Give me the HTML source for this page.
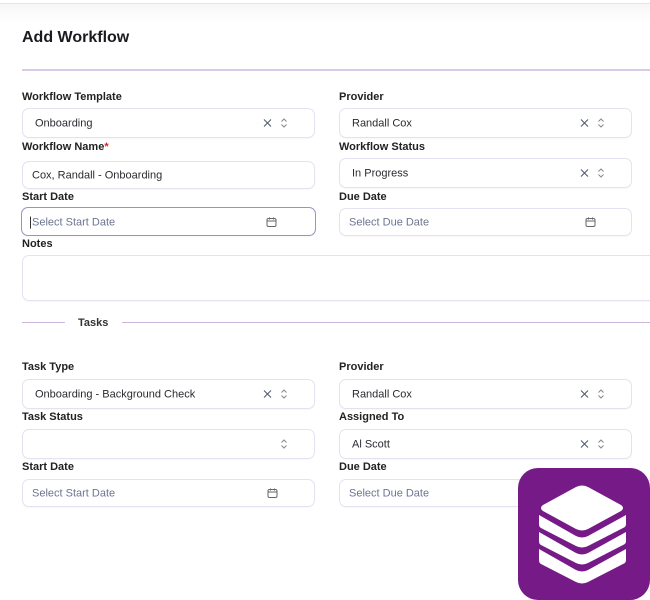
<!DOCTYPE html><html><head><style>
body{margin:0;width:650px;height:600px;background:#fff;font-family:"Liberation Sans",sans-serif;position:relative;overflow:hidden;color:#1f1f24}
.a{position:absolute}
.top{left:-10px;top:3px;width:680px;height:40px;border-top:1px solid #e6e6ea;background:linear-gradient(#f7f7f8,#fff 20px)}
h1{position:absolute;left:22px;top:29px;margin:0;font-size:16px;font-weight:bold;color:#1a1a1f}
.lab{position:absolute;font-size:11px;font-weight:bold;color:#222}
.in{position:absolute;box-sizing:border-box;border:1px solid #e4e2f0;border-radius:7px;background:#fff;font-size:11px;color:#2a2a30;box-shadow:0 1px 1px rgba(0,0,0,.03)}
.in span{position:absolute;left:12px;top:50%;transform:translateY(-45%)}
.ph{color:#6b7590}
.x{position:absolute;top:50%;transform:translateY(-50%)}
.ch{position:absolute;top:50%;transform:translateY(-50%)}
.cal{position:absolute;top:50%;transform:translateY(-50%)}
</style></head><body>
<div class="a top"></div>
<h1>Add Workflow</h1>
<div class="a" style="left:22px;top:69px;width:628px;height:2px;background:#dcc8e8"></div>

<div class="lab" style="left:22px;top:91px">Workflow Template</div>
<div class="in" style="left:22px;top:108px;width:293px;height:30px"><span>Onboarding</span><svg class="x" style="left:240px" width="9" height="9" viewBox="0 0 9 9"><path d="M1 1 8 8M8 1 1 8" stroke="#555c70" stroke-width="1.1"/></svg><svg class="ch" style="left:257px" width="8" height="11" viewBox="0 0 8 11"><path d="M1.5 4 4 1.5 6.5 4M1.5 7 4 9.5 6.5 7" fill="none" stroke="#888" stroke-width="1"/></svg></div>
<div class="lab" style="left:339px;top:91px">Provider</div>
<div class="in" style="left:339px;top:108px;width:293px;height:30px"><span>Randall Cox</span><svg class="x" style="left:240px" width="9" height="9" viewBox="0 0 9 9"><path d="M1 1 8 8M8 1 1 8" stroke="#555c70" stroke-width="1.1"/></svg><svg class="ch" style="left:257px" width="8" height="11" viewBox="0 0 8 11"><path d="M1.5 4 4 1.5 6.5 4M1.5 7 4 9.5 6.5 7" fill="none" stroke="#888" stroke-width="1"/></svg></div>

<div class="lab" style="left:22px;top:141px">Workflow Name<span style="color:#d22">*</span></div>
<div class="in" style="left:22px;top:161px;width:293px;height:28px"><span style="left:9px">Cox, Randall - Onboarding</span></div>
<div class="lab" style="left:339px;top:141px">Workflow Status</div>
<div class="in" style="left:339px;top:158px;width:293px;height:30px"><span>In Progress</span><svg class="x" style="left:240px" width="9" height="9" viewBox="0 0 9 9"><path d="M1 1 8 8M8 1 1 8" stroke="#555c70" stroke-width="1.1"/></svg><svg class="ch" style="left:257px" width="8" height="11" viewBox="0 0 8 11"><path d="M1.5 4 4 1.5 6.5 4M1.5 7 4 9.5 6.5 7" fill="none" stroke="#888" stroke-width="1"/></svg></div>

<div class="lab" style="left:22px;top:191px">Start Date</div>
<div class="in" style="left:21px;top:207px;width:295px;height:29px;border:1.5px solid #a58cc2"><span class="ph" style="left:8px"><span style="position:static;border-left:1px solid #333;margin-right:1px"></span>Select Start Date</span><svg class="cal" style="left:244px" width="11" height="11" viewBox="0 0 11 11"><rect x="1" y="2" width="9" height="8" rx="1.5" fill="none" stroke="#666" stroke-width="1"/><path d="M1 4.5H10M3.5 1V3M7.5 1V3" stroke="#666" stroke-width="1"/></svg></div>
<div class="lab" style="left:339px;top:191px">Due Date</div>
<div class="in" style="left:339px;top:208px;width:293px;height:28px"><span class="ph" style="left:9px">Select Due Date</span><svg class="cal" style="left:245px" width="11" height="11" viewBox="0 0 11 11"><rect x="1" y="2" width="9" height="8" rx="1.5" fill="none" stroke="#666" stroke-width="1"/><path d="M1 4.5H10M3.5 1V3M7.5 1V3" stroke="#666" stroke-width="1"/></svg></div>

<div class="lab" style="left:22px;top:238px">Notes</div>
<div class="in" style="left:22px;top:255px;width:640px;height:46px"></div>

<div class="a" style="left:22px;top:322px;width:43px;height:1px;background:#cdb6e0"></div>
<div class="a" style="left:78px;top:317px;font-size:11px;font-weight:bold;color:#333">Tasks</div>
<div class="a" style="left:122px;top:322px;width:528px;height:1px;background:#cdb6e0"></div>

<div class="lab" style="left:22px;top:361px">Task Type</div>
<div class="in" style="left:22px;top:379px;width:293px;height:30px"><span>Onboarding - Background Check</span><svg class="x" style="left:240px" width="9" height="9" viewBox="0 0 9 9"><path d="M1 1 8 8M8 1 1 8" stroke="#555c70" stroke-width="1.1"/></svg><svg class="ch" style="left:257px" width="8" height="11" viewBox="0 0 8 11"><path d="M1.5 4 4 1.5 6.5 4M1.5 7 4 9.5 6.5 7" fill="none" stroke="#888" stroke-width="1"/></svg></div>
<div class="lab" style="left:339px;top:361px">Provider</div>
<div class="in" style="left:339px;top:379px;width:293px;height:30px"><span>Randall Cox</span><svg class="x" style="left:240px" width="9" height="9" viewBox="0 0 9 9"><path d="M1 1 8 8M8 1 1 8" stroke="#555c70" stroke-width="1.1"/></svg><svg class="ch" style="left:257px" width="8" height="11" viewBox="0 0 8 11"><path d="M1.5 4 4 1.5 6.5 4M1.5 7 4 9.5 6.5 7" fill="none" stroke="#888" stroke-width="1"/></svg></div>

<div class="lab" style="left:22px;top:411px">Task Status</div>
<div class="in" style="left:22px;top:429px;width:293px;height:30px"><svg class="ch" style="left:257px" width="8" height="11" viewBox="0 0 8 11"><path d="M1.5 4 4 1.5 6.5 4M1.5 7 4 9.5 6.5 7" fill="none" stroke="#888" stroke-width="1"/></svg></div>
<div class="lab" style="left:339px;top:411px">Assigned To</div>
<div class="in" style="left:339px;top:429px;width:293px;height:30px"><span>Al Scott</span><svg class="x" style="left:240px" width="9" height="9" viewBox="0 0 9 9"><path d="M1 1 8 8M8 1 1 8" stroke="#555c70" stroke-width="1.1"/></svg><svg class="ch" style="left:257px" width="8" height="11" viewBox="0 0 8 11"><path d="M1.5 4 4 1.5 6.5 4M1.5 7 4 9.5 6.5 7" fill="none" stroke="#888" stroke-width="1"/></svg></div>

<div class="lab" style="left:22px;top:461px">Start Date</div>
<div class="in" style="left:22px;top:479px;width:293px;height:28px"><span class="ph" style="left:9px">Select Start Date</span><svg class="cal" style="left:244px" width="11" height="11" viewBox="0 0 11 11"><rect x="1" y="2" width="9" height="8" rx="1.5" fill="none" stroke="#666" stroke-width="1"/><path d="M1 4.5H10M3.5 1V3M7.5 1V3" stroke="#666" stroke-width="1"/></svg></div>
<div class="lab" style="left:339px;top:461px">Due Date</div>
<div class="in" style="left:339px;top:479px;width:293px;height:28px"><span class="ph" style="left:9px">Select Due Date</span></div>

<svg class="a" style="left:518px;top:468px" width="132" height="132" viewBox="518 468 132 132">
<rect x="518" y="468" width="132" height="132" rx="20" fill="#761a87"/>
<path d="M576 487 Q582 484 588 487 L621 505 Q625 508 621 511 L588 529 Q582 532 576 529 L543 511 Q539 508 543 505 Z" fill="#fff"/>
<path d="M539 515 L576 536 Q582 539 588 536 L626 515 L626 524 Q626 527 623 528 L588 546 Q582 549 576 546 L541 528 Q539 527 539 524 Z" fill="#fff"/>
<path d="M539 532 L576 553 Q582 556 588 553 L626 532 L626 541 Q626 544 623 545 L588 563 Q582 566 576 563 L541 545 Q539 544 539 541 Z" fill="#fff"/>
<path d="M539 549 L576 570 Q582 573 588 570 L626 549 L626 560 Q626 563 623 564 L588 582 Q582 585 576 582 L541 564 Q539 563 539 560 Z" fill="#fff"/>
</svg>
</body></html>
